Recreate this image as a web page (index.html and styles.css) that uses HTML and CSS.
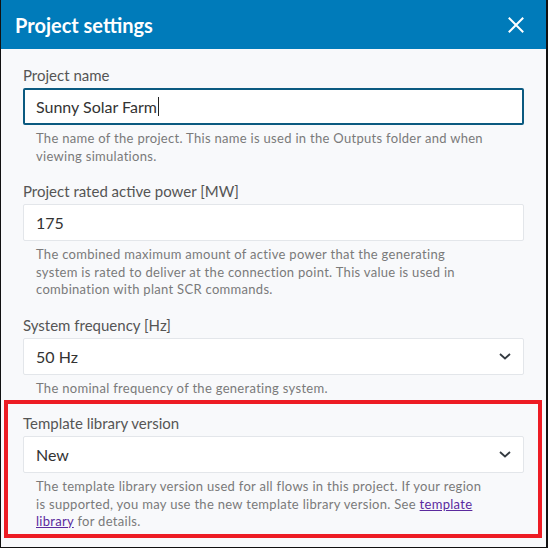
FILE: index.html
```html
<!DOCTYPE html>
<html lang="en">
<head>
    <meta charset="UTF-8">
    <meta name="viewport" content="width=device-width, initial-scale=1.0">
    <title>Project settings</title>
    <link rel="stylesheet" href="styles.css">
</head>
<body>
    <div class="dialog">
        <header class="dialog-header">
            <h1>Project settings</h1>
            <button class="close-btn" aria-label="Close">
                <svg width="16" height="16" viewBox="0 0 16 16">
                    <path d="M1.5 1.5 L14.5 14.5 M14.5 1.5 L1.5 14.5" stroke="#fff" stroke-width="2" stroke-linecap="square"/>
                </svg>
            </button>
        </header>
        <div class="dialog-body">
            <div class="field">
                <label>Project name</label>
                <div class="input focused">Sunny Solar Farm<span class="caret"></span></div>
                <p class="help">The name of the project. This name is used in the Outputs folder and when viewing simulations.</p>
            </div>
            <div class="field">
                <label>Project rated active power [MW]</label>
                <div class="input">175</div>
                <p class="help">The combined maximum amount of active power that the generating system is rated to deliver at the connection point. This value is used in combination with plant SCR commands.</p>
            </div>
            <div class="field">
                <label>System frequency [Hz]</label>
                <div class="input select">
                    <span>50 Hz</span>
                    <svg class="chevron" width="12" height="7" viewBox="0 0 12 7">
                        <path d="M1 1 L6 5.5 L11 1" fill="none" stroke="#343a40" stroke-width="1.8"/>
                    </svg>
                </div>
                <p class="help">The nominal frequency of the generating system.</p>
            </div>
            <div class="field">
                <label>Template library version</label>
                <div class="input select">
                    <span>New</span>
                    <svg class="chevron" width="12" height="7" viewBox="0 0 12 7">
                        <path d="M1 1 L6 5.5 L11 1" fill="none" stroke="#343a40" stroke-width="1.8"/>
                    </svg>
                </div>
                <p class="help">The template library version used for all flows in this project. If your region is supported, you may use the new template library version. See <a href="#">template library</a> for details.</p>
            </div>
        </div>
        <div class="highlight"></div>
    </div>
</body>
</html>
```

FILE: styles.css
```css
html, body {
    margin: 0;
    padding: 0;
}
body {
    font-family: 'Lato', 'Noto Sans', sans-serif;
    background-color: #f8f9fb;
    color: #333;
}
.dialog {
    position: relative;
    width: 548px;
    height: 548px;
    box-sizing: border-box;
    border-left: 1px solid #111;
    border-right: 2px solid #111;
    border-bottom: 1px solid #111;
    background-color: #f8f9fb;
    overflow: hidden;
}
.dialog-header {
    background-color: #007bba;
    height: 49px;
    display: flex;
    align-items: center;
    justify-content: space-between;
    padding: 0 16px 0 14px;
}
.dialog-header h1 {
    margin: 0;
    color: #fff;
    font-size: 20px;
    font-weight: bold;
}
.close-btn {
    background: none;
    border: none;
    padding: 0;
    margin-right: 6px;
    display: flex;
    cursor: pointer;
}
.dialog-body {
    padding: 16px 22px 0 22px;
}
.field {
    margin-bottom: 16px;
}
.field label {
    display: block;
    font-size: 15px;
    line-height: 20px;
    color: #555;
    margin-bottom: 3px;
}
.input {
    box-sizing: border-box;
    height: 37px;
    background-color: #fff;
    border: 1px solid #e3e6ea;
    border-radius: 2px;
    padding: 0 12px;
    display: flex;
    align-items: center;
    font-size: 16px;
    color: #333;
}
.input.focused {
    border: 2px solid #0b5a80;
    padding-left: 11px;
}
.caret {
    display: inline-block;
    width: 1px;
    height: 19px;
    background-color: #222;
    margin-left: 1px;
}
.select {
    justify-content: space-between;
}
.chevron {
    margin-right: 0;
}
.help {
    margin: 5px 0 0 0;
    padding: 0 40px 0 13px;
    font-size: 13px;
    line-height: 17.5px;
    letter-spacing: 0.3px;
    color: #7a7a7a;
}
.help a {
    color: #5b2a9e;
}
.highlight {
    position: absolute;
    left: 3px;
    top: 400px;
    width: 538px;
    height: 138px;
    box-sizing: border-box;
    border: 4.5px solid #ed1c24;
    pointer-events: none;
}
```
